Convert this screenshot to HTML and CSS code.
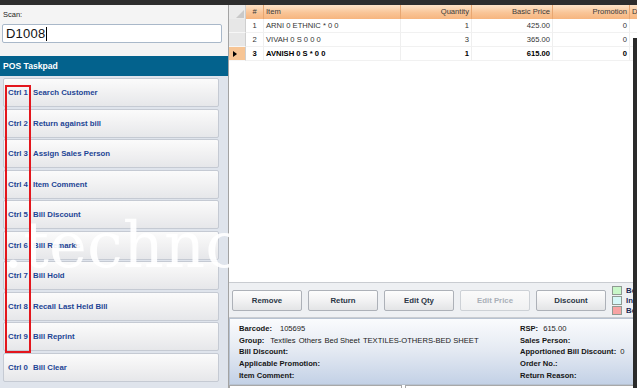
FILE: index.html
```html
<!DOCTYPE html>
<html>
<head>
<meta charset="utf-8">
<link rel="stylesheet" href="styles.css">
</head>
<body>
<div class="app">
  <div class="topbar"></div>
  <div class="main">
    <aside class="left">
      <div class="scan">
        <div class="scan-label">Scan:</div>
        <div class="scan-input">D1008<span class="caret"></span></div>
      </div>
      <div class="taskpad-title">POS Taskpad</div>
      <div class="taskpad">
        <div class="task-btn"><span class="task-key">Ctrl 1</span>Search Customer</div>
        <div class="task-btn"><span class="task-key">Ctrl 2</span>Return against bill</div>
        <div class="task-btn"><span class="task-key">Ctrl 3</span>Assign Sales Person</div>
        <div class="task-btn"><span class="task-key">Ctrl 4</span>Item Comment</div>
        <div class="task-btn"><span class="task-key">Ctrl 5</span>Bill Discount</div>
        <div class="task-btn"><span class="task-key">Ctrl 6</span>Bill Remarks</div>
        <div class="task-btn"><span class="task-key">Ctrl 7</span>Bill Hold</div>
        <div class="task-btn"><span class="task-key">Ctrl 8</span>Recall Last Held Bill</div>
        <div class="task-btn"><span class="task-key">Ctrl 9</span>Bill Reprint</div>
        <div class="task-btn"><span class="task-key">Ctrl 0</span>Bill Clear</div>
      </div>
    </aside>
    <section class="right">
      <div class="grid">
        <div class="grid-row grid-head">
          <div class="hcell rh-head"><svg width="9" height="9" viewBox="0 0 9 9"><polygon points="9,1 9,9 1,9" fill="#c9c9c9"/></svg></div>
          <div class="hcell center">#</div>
          <div class="hcell">Item</div>
          <div class="hcell num">Quantity</div>
          <div class="hcell num">Basic Price</div>
          <div class="hcell num">Promotion</div>
          <div class="hcell">Disc</div>
        </div>
        <div class="grid-row">
          <div class="rh"></div>
          <div class="cell center">1</div>
          <div class="cell">ARNI 0 ETHNIC * 0 0</div>
          <div class="cell num">1</div>
          <div class="cell num">425.00</div>
          <div class="cell num">0</div>
          <div class="cell"></div>
        </div>
        <div class="grid-row">
          <div class="rh"></div>
          <div class="cell center">2</div>
          <div class="cell">VIVAH 0 S 0 0 0</div>
          <div class="cell num">3</div>
          <div class="cell num">365.00</div>
          <div class="cell num">0</div>
          <div class="cell"></div>
        </div>
        <div class="grid-row sel-row">
          <div class="rh sel"><span class="arrow"></span></div>
          <div class="cell center">3</div>
          <div class="cell">AVNISH 0 S * 0 0</div>
          <div class="cell num">1</div>
          <div class="cell num">615.00</div>
          <div class="cell num">0</div>
          <div class="cell"></div>
        </div>
      </div>
      <div class="toolbar">
        <div class="tb-btn">Remove</div>
        <div class="tb-btn">Return</div>
        <div class="tb-btn">Edit Qty</div>
        <div class="tb-btn disabled">Edit Price</div>
        <div class="tb-btn">Discount</div>
        <div class="legend">
          <div class="legend-item"><span class="swatch green"></span>Be</div>
          <div class="legend-item"><span class="swatch cyan"></span>In</div>
          <div class="legend-item"><span class="swatch pink"></span>Be</div>
        </div>
      </div>
      <div class="details">
        <div class="det-col l">
          <div><span class="k k-barcode">Barcode:</span>105695</div>
          <div><span class="k k-group">Group:</span><span class="gv">Textiles</span><span class="gv">Others</span><span class="gv">Bed Sheet</span><span class="gv">TEXTILES-OTHERS-BED SHEET</span></div>
          <div><span class="k">Bill Discount:</span></div>
          <div><span class="k">Applicable Promotion:</span></div>
          <div><span class="k">Item Comment:</span></div>
        </div>
        <div class="det-col r">
          <div><span class="k k-rsp">RSP:</span>615.00</div>
          <div><span class="k">Sales Person:</span></div>
          <div><span class="k k-app">Apportioned Bill Discount:</span>0</div>
          <div><span class="k">Order No.:</span></div>
          <div><span class="k">Return Reason:</span></div>
        </div>
      </div>
      <div class="bottom">
        <div class="bbox first"></div>
        <div class="bbox"></div>
      </div>
    </section>
  </div>
  <div class="watermark">.technologies</div>
  <div class="annot"></div>
  <div class="edge"></div>
</div>
</body>
</html>
```

FILE: styles.css
```css
* { box-sizing: border-box; }
body { margin: 0; font-family: "Liberation Sans", Arial, sans-serif; background: #fff; }

.app {
  position: relative;
  width: 637px;
  height: 388px;
  overflow: hidden;
  display: flex;
  flex-direction: column;
  background: #fff;
}
.topbar { height: 5px; flex: none; background: #2d2d2d; }
.main { display: flex; flex: 1; min-height: 0; overflow: hidden; }

/* Left */
.left {
  width: 228px;
  flex: none;
  display: flex;
  flex-direction: column;
  background: #f4f4f4;
}
.scan { padding: 5px 0 13px 2px; }
.scan-label { font-size: 7.5px; line-height: 10px; color: #222; padding-left: 1px; }
.scan-input {
  margin-top: 4px;
  width: 220px;
  height: 19px;
  border: 1px solid #a9b8c9;
  border-radius: 2px;
  background: #fff;
  font-size: 13px;
  color: #111;
  padding-left: 3px;
  display: flex;
  align-items: center;
  letter-spacing: 0.2px;
}
.caret { width: 1px; height: 14px; background: #000; margin-left: 1px; }
.taskpad-title {
  height: 20px;
  background: #03628d;
  color: #fff;
  font-weight: bold;
  font-size: 8.6px;
  line-height: 20px;
  padding-left: 3px;
}
.taskpad {
  flex: 1;
  background: #dfe4ec;
  padding: 2px 0 0 3px;
  display: flex;
  flex-direction: column;
  gap: 1.5px;
}
.task-btn {
  width: 216px;
  height: 29px;
  flex: none;
  border: 1px solid #c5cad3;
  border-radius: 2px;
  background: linear-gradient(#fbfbfb, #f1f1f2 50%, #e6e7ea);
  display: flex;
  align-items: center;
  padding-left: 4px;
  font-size: 7.8px;
  font-weight: bold;
  color: #1d4595;
  white-space: nowrap;
}
.task-key { width: 25px; flex: none; }

/* Right */
.right {
  flex: 1;
  min-width: 0;
  display: flex;
  flex-direction: column;
  border-left: 1px solid #a3a3a3;
  overflow: hidden;
}
.grid {
  height: 277px;
  flex: none;
  background: #fff;
  overflow: hidden;
  font-size: 7.6px;
  color: #333;
}
.grid-row {
  display: grid;
  grid-template-columns: 17px 18px 137px 71px 81px 77px 60px;
  height: 14px;
}
.grid-head {
  background: linear-gradient(#fde3c8, #f9c597 55%, #f6b57f);
  color: #3a3a3a;
}
.hcell {
  line-height: 14px;
  padding: 0 2px;
  border-right: 1px solid #e8a772;
  white-space: nowrap;
  overflow: hidden;
}
.rh-head {
  background: #ebebeb;
  border-right: 1px solid #cfcfcf;
  display: flex;
  align-items: flex-end;
  justify-content: flex-end;
  padding: 0 1px 1px 0;
}
.cell {
  line-height: 14px;
  padding: 0 2px;
  white-space: nowrap;
  overflow: hidden;
  border-right: 1px solid #efefef;
  border-bottom: 1px solid #f1f1f1;
}
.center { text-align: center; }
.num { text-align: right; }
.rh {
  background: #e7e7e7;
  border-right: 1px solid #cfcfcf;
  border-bottom: 1px solid #f7f7f7;
  display: flex;
  align-items: center;
  padding-left: 4px;
}
.rh.sel { background: #f7c595; }
.arrow {
  width: 0;
  height: 0;
  border-left: 4px solid #000;
  border-top: 3px solid transparent;
  border-bottom: 3px solid transparent;
}
.sel-row .cell { font-weight: bold; color: #000; }

/* Toolbar */
.toolbar {
  height: 36px;
  flex: none;
  background: #eef0f3;
  border-top: 1px solid #c9ccd1;
  border-bottom: 1px solid #c9ccd1;
  display: flex;
  align-items: flex-start;
  gap: 6px;
  padding: 3px 0 0 3px;
}
.tb-btn {
  width: 70px;
  height: 21px;
  flex: none;
  margin-top: 4px;
  border: 1px solid #adb1b8;
  border-radius: 2px;
  background: linear-gradient(#fdfdfd, #f2f2f3 50%, #e3e4e6);
  font-size: 7.8px;
  font-weight: bold;
  color: #2b3645;
  display: flex;
  align-items: center;
  justify-content: center;
}
.tb-btn.disabled {
  color: #a9b0b8;
  border-color: #cdd1d6;
  background: linear-gradient(#fafafa, #f0f1f2);
}
.legend { display: flex; flex-direction: column; gap: 1px; }
.legend-item {
  display: flex;
  align-items: center;
  gap: 4px;
  height: 9px;
  font-size: 7.8px;
  font-weight: bold;
  color: #1d2a55;
  white-space: nowrap;
}
.swatch { width: 10px; height: 9px; border: 1px solid #8f9a92; flex: none; }
.swatch.green { background: #c8f7c8; }
.swatch.cyan { background: #d6f7f7; }
.swatch.pink { background: #f7a3a3; }

/* Details */
.details {
  height: 67px;
  flex: none;
  background: linear-gradient(#fafbfd, #e6ebf3 45%, #c3d1e6);
  border: 1px solid #b7c2d1;
  padding: 4px 0 0 9px;
  display: flex;
}
.det-col {
  display: flex;
  flex-direction: column;
  font-size: 7.6px;
  line-height: 11.7px;
  color: #1a1a1a;
  white-space: nowrap;
}
.det-col.l { width: 281px; }
.k { font-weight: bold; color: #161616; }
.k-barcode { margin-right: 8px; }
.k-group { margin-right: 6px; }
.gv { margin-right: 3px; }
.k-rsp { margin-right: 5px; }
.k-app { margin-right: 4px; }

.bottom { height: 12px; flex: none; display: flex; gap: 3px; }
.bbox { flex: 1; background: #fff; border: 1px solid #a8a8a8; }
.bbox.first { flex: none; width: 173px; }

/* Overlays */
.watermark {
  position: absolute;
  left: 3px;
  top: 213px;
  font-family: "DejaVu Serif", serif;
  font-size: 64px;
  line-height: 1;
  color: rgba(255, 255, 255, 0.92);
  white-space: nowrap;
  pointer-events: none;
}
.annot {
  position: absolute;
  left: 5px;
  top: 85px;
  width: 26px;
  height: 268px;
  border: 2px solid #e3161d;
}
.edge {
  position: absolute;
  right: 0;
  top: 38px;
  bottom: 0;
  width: 4px;
  background: #2b2b2b;
}
```
